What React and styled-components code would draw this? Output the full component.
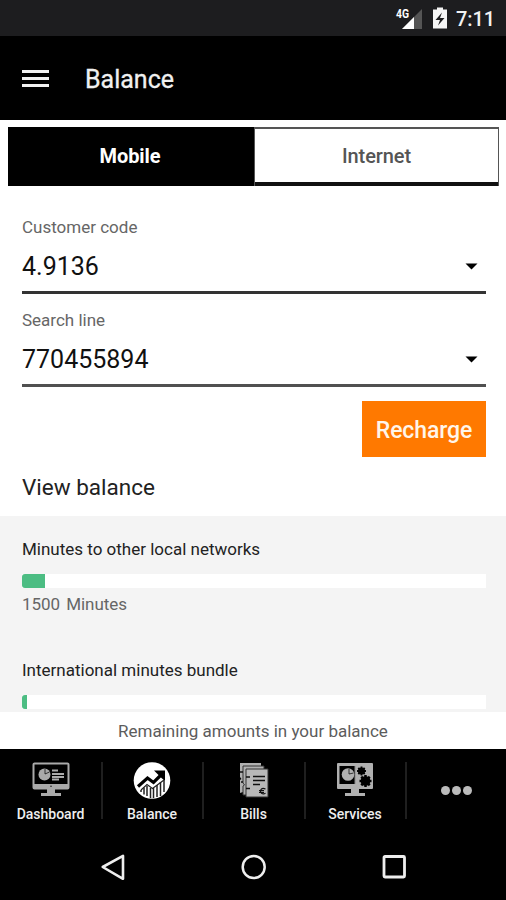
import styled, { createGlobalStyle } from "styled-components";

const GlobalStyle = createGlobalStyle`
  * {
    box-sizing: border-box;
  }
  body {
    margin: 0;
    background: white;
    font-family: Roboto, "Liberation Sans", sans-serif;
  }
  svg {
    display: block;
    flex: none;
  }
`;
const Screen = styled.div`
  width: 506px;
  height: 900px;
  display: flex;
  flex-direction: column;
  overflow: hidden;
  background: #fff;
`;
const StatusBar = styled.div`
  height: 36px;
  flex: none;
  display: flex;
  align-items: center;
  justify-content: flex-end;
  padding: 0 11px 1px 0;
  background: #1d1d1f;
  color: #f2f2f2;
`;
const Clock = styled.span`
  margin-left: 8px;
  padding-top: 3px;
  font-size: 20px;
  line-height: 24px;
  font-weight: 500;
  letter-spacing: -0.1px;
`;
const Header = styled.header`
  height: 84px;
  flex: none;
  display: flex;
  align-items: center;
  padding: 2px 22px 0;
  background: #000;

  h1 {
    margin: 2px 0 0 36px;
    color: #f0f0f0;
    font-size: 25px;
    line-height: 32px;
    font-weight: 400;
    -webkit-text-stroke: 0.3px #f0f0f0;
  }
`;
const Tabs = styled.div`
  display: flex;
  height: 59px;
  flex: none;
  margin: 7px 7px 0 8px;
`;
const Tab = styled.button`
  flex: ${props => (props.$active ? "0 0 246px" : "1")};
  padding: ${props => (props.$active ? "0 2px 1px 0" : "0 0 4px")};
  border: ${props => (props.$active ? "0" : "solid #555")};
  border-width: ${props => (props.$active ? "0" : "2px 1px 0 1px")};
  box-shadow: ${props => (props.$active ? "none" : "inset 0 -4px 0 #111")};
  background: ${props => (props.$active ? "#000" : "#fff")};
  color: ${props => (props.$active ? "#fff" : "#555")};
  font-family: inherit;
  font-size: 20px;
  font-weight: ${props => (props.$active ? 700 : 500)};
  letter-spacing: -0.1px;
`;
const Form = styled.div`
  height: 330px;
  flex: none;
  display: flex;
  flex-direction: column;
  padding: 30px 20px 0 22px;
`;
const Field = styled.div`
  height: 93px;
  flex: none;
  color: #666;

  label {
    display: block;
    height: 22px;
    font-size: 17px;
    line-height: 22px;
  }
`;
const Select = styled.div`
  height: 56px;
  display: flex;
  align-items: center;
  justify-content: space-between;
  padding: 4px 8px 0 0;
  border-bottom: 3px solid ${props => props.$line};
  color: #111;
  font-size: 25px;
`;
const Recharge = styled.button`
  width: 124px;
  height: 56px;
  flex: none;
  align-self: flex-end;
  margin-top: -1px;
  padding: 2px 0 0;
  border: 0;
  background: #ff7900;
  color: #fff5ea;
  font-family: inherit;
  font-size: 23px;
  font-weight: 500;
  letter-spacing: -0.1px;
`;
const SectionTitle = styled.h2`
  margin: 15px 0 0;
  color: #222;
  font-size: 22.5px;
  line-height: 30px;
  font-weight: 400;
`;
const Bundles = styled.div`
  height: 196px;
  flex: none;
  padding: 22px 20px 0 22px;
  overflow: hidden;
  background: #f4f4f4;
`;
const Bundle = styled.div`
  height: 120.5px;
  color: #222;
  font-size: 17px;
  line-height: 22px;
`;
const Track = styled.div`
  height: 14px;
  margin: 14px 0 5px;
  background: #fff;
`;
const Bar = styled.div`
  height: 14px;
  border-radius: 3px 0 0 3px;
  background: #4cbd83;
`;
const Amount = styled.div`
  color: #666;
  word-spacing: 2px;
  letter-spacing: -0.05px;
`;
const Note = styled.div`
  height: 37px;
  flex: none;
  padding-top: 8px;
  color: #5c5c5c;
  font-size: 17px;
  line-height: 22px;
  text-align: center;
`;
const BottomTabs = styled.nav`
  height: 85px;
  flex: none;
  display: grid;
  grid-template-columns: 103px 101px 102px 101px 99px;
  align-items: start;
  padding-top: 13px;
  background: #000;
`;
const NavItem = styled.div`
  height: 57px;
  display: flex;
  flex-direction: column;
  align-items: center;
  gap: 7px;
  padding-right: 1px;
  border-right: ${props => (props.$last ? "0" : "2px solid #1f1f1f")};
  color: #eee;
  font-size: 14px;
  line-height: 18px;
  font-weight: 500;

  &:first-child,
  &:last-child {
    padding-right: 0;
  }
`;
const IconBox = styled.div`
  height: 36px;
`;
const Dots = styled.div`
  height: 57px;
  display: flex;
  align-items: center;
  gap: 2px;

  span {
    width: 9px;
    height: 9px;
    border-radius: 50%;
    background: #bbb;
  }
`;
const SystemNav = styled.div`
  flex: 1;
  display: flex;
  justify-content: space-between;
  padding: 20px 99px 0 100px;
  background: #000;
`;

const SignalIcon = () => (
  <svg width="38" height="26" viewBox="0 0 38 26">
    <path d="M28 4v20H8z" fill="#555" />
    <path d="M20 12v12H8z" fill="#fff" />
    <text x="2" y="13" fill="#fff" fontSize="12.500" fontWeight="700" textLength="13" lengthAdjust="spacingAndGlyphs">4G</text>
  </svg>
);

const BatteryIcon = () => (
  <svg width="16" height="22" viewBox="0 0 16 22">
    <path d="M5 .5h6v2h4v19H1v-19h4z" fill="#f5f5f5" />
    <path d="M10 5.500 3.500 13H8l-2 5.500L12.500 11H8z" fill="#1d1d1f" />
  </svg>
);

const MenuIcon = () => (
  <svg width="27" height="20" viewBox="0 0 27 20">
    <path d="M0 2.500h27M0 9.500h27M0 16.500h27" stroke="#f2f2f2" strokeWidth="3" />
  </svg>
);

const Caret = () => (
  <svg width="13" height="8" viewBox="0 0 13 8">
    <path d="M.5.5h12l-6 6z" fill="#000" />
  </svg>
);

const DashboardIcon = () => (
  <svg width="38" height="36" viewBox="0 0 38 36">
    <rect x="1.500" y="1.500" width="35" height="25" rx="1" fill="none" stroke="#aaa" strokeWidth="2" />
    <path d="M1 22h36v4.500H1zM15 27h8v4h6v3H9v-3h6z" fill="#aaa" />
    <circle cx="12.500" cy="12.500" r="6" fill="#aaa" />
    <path d="M13 12V7M13 12l4.500-2" stroke="#000" strokeWidth=".7" />
    <path d="M20 8.500h6M20 12h12M20 15h12M20 17.500h7" stroke="#aaa" strokeWidth="2" />
    <circle cx="19" cy="24.300" r=".7" fill="#000" />
  </svg>
);

const BalanceIcon = () => (
  <svg width="38" height="38" viewBox="0 0 38 38">
    <circle cx="19" cy="18.500" r="18.300" fill="#fff" />
    <path d="m5 24.500 9.500-8.500 6 4.500L29 12" fill="none" stroke="#000" strokeWidth="3.200" />
    <path d="M21 8.500h11V19l-3.500-3-4-4z" fill="#000" />
    <path d="M8 30v-2M11 25.500v7M14 24v10M17.500 26v10M20.500 26v10M24 23v12M27.500 20v14M31 18.500V30" fill="none" stroke="#222" strokeWidth="1.500" />
    <path d="m8 28 6-5.500 5.500 4L31 18" fill="none" stroke="#222" strokeWidth="1.200" />
  </svg>
);

const BillsIcon = () => (
  <svg width="30" height="36" viewBox="0 0 30 36">
    <path d="M1 1h21v29H4l-3 1V18l1.500-1L1 15z" fill="#b0b0b0" />
    <path d="M4 4h21v29H4v-9l1.500-1L4 21z" fill="#b0b0b0" stroke="#333" />
    <path d="M7 7h22v28H7V7z" fill="#b8b8b8" stroke="#333" />
    <path d="M14 14.500h12M14 18.500h12M14 22.500h7M7 15h4M7 26.500h4M1 10h3M2 20h2" stroke="#111" strokeWidth="1.600" />
    <path d="M26.500 27c-4-1.500-5 .5-5 2.200s2 3.600 5 2M20 28.500h5M20 30.300h5" fill="none" stroke="#111" strokeWidth="1.200" />
  </svg>
);

const gearTeeth = [0, 45, 90, 135];

const Gear = ({ x, y, scale = 1 }) => (
  <g transform={`translate(${x} ${y}) scale(${scale})`} stroke="#000" strokeWidth="2.500">
    <circle r="4.800" fill="#000" stroke="none" />
    {gearTeeth.map(angle => (
      <path key={angle} d="M-6 0H6" transform={`rotate(${angle})`} />
    ))}
  </g>
);

const ServicesIcon = () => (
  <svg width="38" height="36" viewBox="0 0 38 36">
    <path d="M2 1h34q1 0 1 1v24q0 1-1 1H2q-1 0-1-1V2q0-1 1-1M15 27h8v4h6v3H9v-3h6z" fill="#b0b0b0" />
    <path d="M3.500 4H19v18H3.500z" fill="#000" />
    <circle cx="12" cy="12.500" r="6.300" fill="#b0b0b0" />
    <path d="M13 12V7M13 12l4.500-1" stroke="#000" strokeWidth=".7" />
    <path d="M19 4v18" stroke="#888" />
    <Gear x={25.500} y={9} scale={0.750} />
    <Gear x={29.500} y={19} />
  </svg>
);

const BackIcon = () => (
  <svg width="27" height="27" viewBox="0 0 27 27">
    <path d="M23 1.800v23L2.700 13z" fill="none" stroke="#eee" strokeWidth="2.600" strokeLinejoin="round" />
  </svg>
);

const HomeIcon = () => (
  <svg width="27" height="27" viewBox="0 0 27 27">
    <circle cx="13.700" cy="13" r="11" fill="none" stroke="#eee" strokeWidth="2.500" />
  </svg>
);

const RecentIcon = () => (
  <svg width="27" height="27" viewBox="0 0 27 27">
    <rect x="4" y="2.500" width="20.500" height="20.500" rx="1" fill="none" stroke="#eee" strokeWidth="2.800" />
  </svg>
);

const fields = [
  { label: "Customer code", value: "4.9136", line: "#333" },
  { label: "Search line", value: "770455894", line: "#505050" },
];

const bundles = [
  { name: "Minutes to other local networks", percent: 5, amount: "1500 Minutes" },
  { name: "International minutes bundle", percent: 1, amount: "" },
];

const navItems = [
  { label: "Dashboard", Icon: DashboardIcon },
  { label: "Balance", Icon: BalanceIcon },
  { label: "Bills", Icon: BillsIcon },
  { label: "Services", Icon: ServicesIcon },
];

function App() {
  return (
    <>
      <GlobalStyle />
      <Screen>
        <StatusBar>
          <SignalIcon />
          <BatteryIcon />
          <Clock>7:11</Clock>
        </StatusBar>
        <Header>
          <MenuIcon />
          <h1>Balance</h1>
        </Header>
        <Tabs>
          <Tab $active>Mobile</Tab>
          <Tab>Internet</Tab>
        </Tabs>
        <Form>
          {fields.map(field => (
            <Field key={field.label}>
              <label>{field.label}</label>
              <Select $line={field.line}>
                {field.value}
                <Caret />
              </Select>
            </Field>
          ))}
          <Recharge>Recharge</Recharge>
          <SectionTitle>View balance</SectionTitle>
        </Form>
        <Bundles>
          {bundles.map(bundle => (
            <Bundle key={bundle.name}>
              {bundle.name}
              <Track>
                <Bar style={{ width: `${bundle.percent}%` }} />
              </Track>
              <Amount>{bundle.amount}</Amount>
            </Bundle>
          ))}
        </Bundles>
        <Note>Remaining amounts in your balance</Note>
        <BottomTabs>
          {navItems.map(({ label, Icon }) => (
            <NavItem key={label}>
              <IconBox>
                <Icon />
              </IconBox>
              {label}
            </NavItem>
          ))}
          <NavItem $last>
            <Dots>
              <span />
              <span />
              <span />
            </Dots>
          </NavItem>
        </BottomTabs>
        <SystemNav>
          <BackIcon />
          <HomeIcon />
          <RecentIcon />
        </SystemNav>
      </Screen>
    </>
  );
}

export default App;
